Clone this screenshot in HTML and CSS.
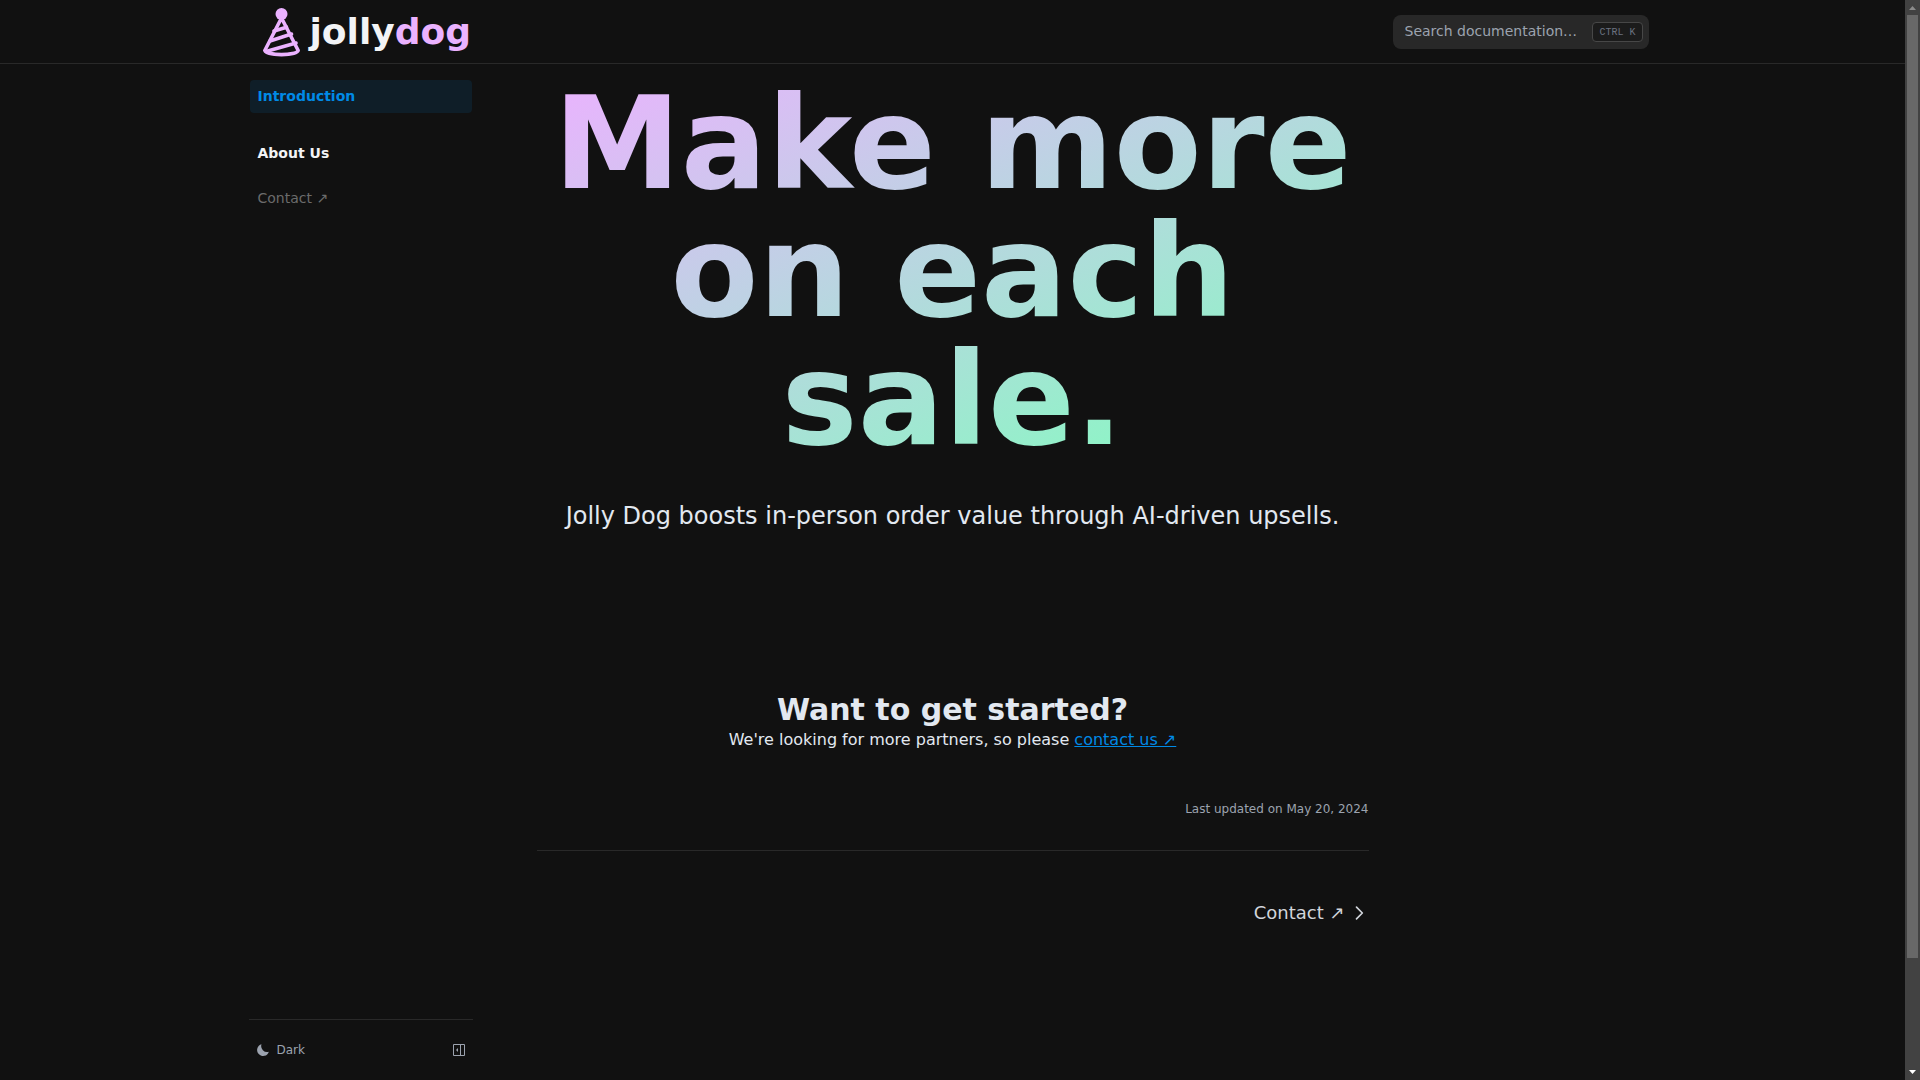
FILE: index.html
```html
<!DOCTYPE html>
<html lang="en">
<head>
    <meta charset="UTF-8">
    <meta name="viewport" content="width=device-width, initial-scale=1.0">
    <title>Introduction – Jolly Dog</title>
    <link rel="stylesheet" href="styles.css">
</head>
<body>

    <!-- Top bar -->
    <header class="navbar">
        <nav class="navbar-inner">
            <a class="logo" href="#">
                <svg class="logo-icon" viewBox="0 0 42 50" fill="none" stroke="#ebb2ff" stroke-width="3.6" stroke-linecap="round" stroke-linejoin="round">
                    <circle cx="20.500" cy="7" r="6" fill="#ebb2ff" stroke="none"/>
                    <path d="M20.500 11 3.800 43.500c2 5.500 31.400 5.500 33.400 0z"/>
                    <path d="M13 24l12.500-3.800M9 34l21.500-7M5 44.500l30-8.500"/>
                </svg>
                <span class="logo-text">jolly<span class="logo-accent">dog</span></span>
            </a>
            <div class="search">
                <input type="search" class="search-input" placeholder="Search documentation…" aria-label="Search documentation">
                <kbd class="search-key">CTRL K</kbd>
            </div>
        </nav>
    </header>

    <div class="layout">

        <!-- Sidebar -->
        <aside class="sidebar">
            <ul class="menu">
                <li><a class="menu-link active" href="#">Introduction</a></li>
                <li class="menu-title">About Us</li>
                <li><a class="menu-link" href="#contact">Contact ↗</a></li>
            </ul>
            <div class="sidebar-footer">
                <button type="button" class="theme-button">
                    <svg width="12" height="12" viewBox="2 2 20 20" fill="currentColor"><path d="M9.500 2.300A10 10 0 1 0 21.700 15 10 10 0 0 1 9.500 2.300z"/></svg>
                    <span>Dark</span>
                </button>
                <button type="button" class="collapse-button" aria-label="Hide sidebar">
                    <svg width="12" height="12" viewBox="0 0 12 12" fill="none" stroke="currentColor"><path d="M.5.5h11v11H.5zM7.500.5v11"/><path d="M5 4v4L3 6z" fill="currentColor" stroke="none"/></svg>
                </button>
            </div>
        </aside>

        <!-- Content -->
        <article class="content">
            <main class="page">
                <h1 class="headline">Make more on each sale.</h1>
                <p class="subtitle">Jolly Dog boosts in-person order value through AI-driven upsells.</p>
                <section class="started">
                    <h3>Want to get started?</h3>
                    <p>We're looking for more partners, so please <a href="#contact">contact us ↗</a></p>
                </section>
                <p class="updated">Last updated on <time datetime="2024-05-20">May 20, 2024</time></p>
                <div class="pager">
                    <a class="pager-next" href="#contact">Contact ↗
                        <svg width="20" height="20" viewBox="0 0 24 24" fill="none" stroke="currentColor" stroke-width="2" stroke-linecap="round" stroke-linejoin="round"><path d="M9 5l7 7-7 7"/></svg>
                    </a>
                </div>
            </main>
        </article>

        <div class="toc"></div>
    </div>

    <!-- Scroll track -->
    <div class="scrollbar">
        <svg width="7" height="4" viewBox="0 0 7 4" fill="#8b8b8b"><path d="M0 4h7L3.500 0z"/></svg>
        <div class="scrollbar-thumb"></div>
        <svg width="7" height="4" viewBox="0 0 7 4" fill="#fff"><path d="M0 0h7L3.500 4z"/></svg>
    </div>

</body>
</html>
```
FILE: styles.css
```css
* {
    box-sizing: border-box;
}

body {
    margin: 0;
    padding-right: 15px;
    background-color: #111;
    color: #e2e8f0;
    font-family: "DejaVu Sans", sans-serif;
    font-size: 16px;
    line-height: 24px;
}

h1, h3, p, ul {
    margin: 0;
    padding: 0;
}

ul {
    list-style: none;
}

a {
    color: #008ae6;
}

button {
    display: flex;
    align-items: center;
    background: none;
    border: none;
    color: #9ca3af;
    font-family: inherit;
    font-size: 12px;
    line-height: 16px;
    cursor: pointer;
}

/* top bar */
.navbar {
    height: 64px;
    border-bottom: 1px solid #292929;
}

.navbar-inner {
    display: flex;
    align-items: center;
    justify-content: space-between;
    max-width: 1440px;
    height: 100%;
    margin: 0 auto;
    padding: 0 24px;
}

.logo {
    display: flex;
    align-items: center;
    gap: 7px;
    padding-left: 4px;
    text-decoration: none;
}

.logo-icon {
    width: 42px;
    height: 50px;
}

.logo-text {
    color: #f3f4f6;
    font-size: 36px;
    font-weight: bold;
    line-height: 40px;
}

.logo-accent {
    color: #ebb2ff;
}

.search {
    display: flex;
    align-items: center;
    width: 256px;
    height: 34px;
    padding: 0 6px 0 12px;
    background-color: #282828;
    border-radius: 8px;
}

.search-input {
    flex: 1;
    min-width: 0;
    padding: 0 0 2px;
    background: none;
    border: none;
    outline: none;
    color: #e5e7eb;
    font-family: inherit;
    font-size: 14px;
    line-height: 20px;
}

.search-input::placeholder {
    color: #9ca3af;
    opacity: 1;
}

.search-key {
    height: 20px;
    padding: 0 6px;
    background-color: #1b1b1b;
    border: 1px solid #474747;
    border-radius: 4px;
    color: #6b7280;
    font-family: "Liberation Mono", monospace;
    font-size: 10px;
    line-height: 20px;
}

/* columns */
.layout {
    display: flex;
    max-width: 1440px;
    min-height: calc(100vh - 64px);
    margin: 0 auto;
}

.sidebar {
    display: flex;
    flex-direction: column;
    justify-content: space-between;
    flex: 0 0 256px;
}

.menu {
    padding: 16px 17px;
    font-size: 14px;
    line-height: 17px;
}

.menu-link {
    display: block;
    padding: 8px;
    border-radius: 4px;
    color: #6b6b6b;
    text-decoration: none;
}

.menu-link.active {
    background-color: #0f1e28;
    color: #008ae6;
    font-weight: bold;
}

.menu-title {
    margin: 24px 0 12px;
    padding: 8px;
    color: #f3f4f6;
    font-weight: bold;
}

.sidebar-footer {
    display: flex;
    align-items: center;
    justify-content: space-between;
    height: 61px;
    margin: 0 16px;
    border-top: 1px solid #292929;
}

.theme-button {
    gap: 8px;
    padding: 4px 8px;
}

.collapse-button {
    padding: 8px;
}

.content {
    flex: 1;
    min-width: 0;
}

.page {
    padding: 16px 48px 0;
    text-align: center;
}

.toc {
    flex: 0 0 256px;
}

.headline {
    background-image: linear-gradient(to bottom right, #ebb2ff, #8af7c4 88%);
    background-clip: text;
    -webkit-background-clip: text;
    color: transparent;
    font-size: 128px;
    line-height: 128px;
}

.subtitle {
    margin-top: 36px;
    font-size: 24px;
    line-height: 32px;
}

.started {
    margin-top: 160px;
}

.started h3 {
    font-size: 30px;
    line-height: 36px;
}

.updated {
    margin-top: 48px;
    color: #9ca3af;
    font-size: 12px;
    line-height: 18px;
    text-align: right;
}

.pager {
    display: flex;
    justify-content: flex-end;
    margin-top: 32px;
    padding-top: 48px;
    border-top: 1px solid #292929;
}

.pager-next {
    display: flex;
    align-items: center;
    gap: 4px;
    color: #d1d5db;
    font-size: 18px;
    line-height: 28px;
    text-decoration: none;
}

/* scroll track */
.scrollbar {
    position: fixed;
    top: 0;
    right: 0;
    bottom: 0;
    display: flex;
    flex-direction: column;
    align-items: center;
    justify-content: space-between;
    width: 15px;
    padding: 6px 0;
    background-color: #424242;
}

.scrollbar-thumb {
    width: 11px;
    height: calc(100% - 125px);
    margin: 5px 0 auto;
    background-color: #686868;
}
```
